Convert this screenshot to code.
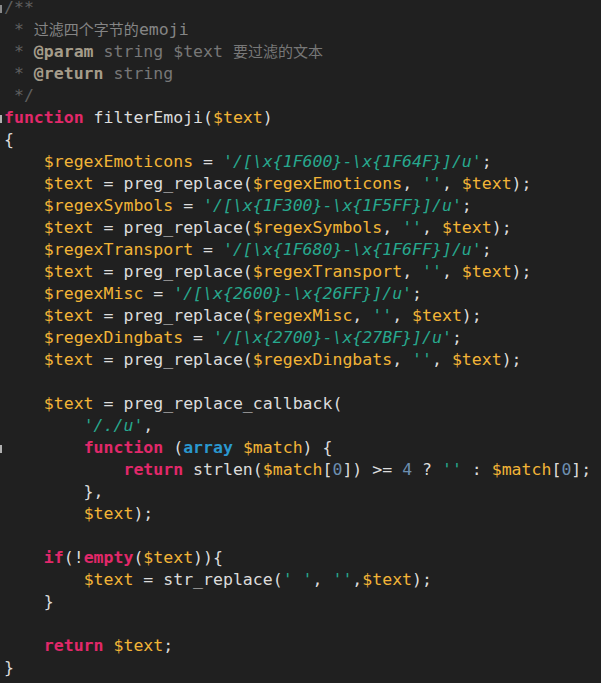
import React from "react";

type Tok = [string, string];

const C = {
  d: "text-[#dcdcdc]",
  v: "text-[#f2b437]",
  s: "text-[#27a88e] italic",
  k: "text-[#e2286a] font-bold",
  t: "text-[#2a97cf] font-bold",
  n: "text-[#6d8fb0]",
  c: "text-[#5f5f5f]",
  ct: "text-[#858585]",
  cj: "text-[#858585] text-[15px]",
  ca: "text-[#a59c8a] font-bold",
  cs: "text-[#777777]",
  csj: "text-[#777777] text-[15px]",
} as const;

const L = (...toks: [keyof typeof C, string][]): Tok[] => toks.map(([k, t]) => [C[k], t]);

const rep = (name: string): Tok[] =>
  L(["d", "    "], ["v", "$text"], ["d", " = preg_replace("], ["v", name], ["d", ", "], ["s", "''"], ["d", ", "], ["v", "$text"], ["d", ");"]);

const def = (name: string, a: string, b: string): Tok[] =>
  L(["d", "    "], ["v", name], ["d", " = "], ["s", `'/[\\x{${a}}-\\x{${b}}]/u'`], ["d", ";"]);

const lines: { toks: Tok[]; mark?: string }[] = [
  { toks: L(["c", "/**"]), mark: "bg-[#8a8a8a]" },
  { toks: L(["c", " * "], ["cj", "过滤四个字节的"], ["ct", "emoji"]) },
  { toks: L(["c", " * "], ["ca", "@param"], ["cs", " string $text "], ["csj", "要过滤的文本"]) },
  { toks: L(["c", " * "], ["ca", "@return"], ["cs", " string"]) },
  { toks: L(["c", " */"]) },
  { toks: L(["k", "function"], ["d", " filterEmoji("], ["v", "$text"], ["d", ")"]), mark: "bg-[#b0b0b0]" },
  { toks: L(["d", "{"]) },
  { toks: def("$regexEmoticons", "1F600", "1F64F") },
  { toks: rep("$regexEmoticons") },
  { toks: def("$regexSymbols", "1F300", "1F5FF") },
  { toks: rep("$regexSymbols") },
  { toks: def("$regexTransport", "1F680", "1F6FF") },
  { toks: rep("$regexTransport") },
  { toks: def("$regexMisc", "2600", "26FF") },
  { toks: rep("$regexMisc") },
  { toks: def("$regexDingbats", "2700", "27BF") },
  { toks: rep("$regexDingbats") },
  { toks: [] },
  { toks: L(["d", "    "], ["v", "$text"], ["d", " = preg_replace_callback("]) },
  { toks: L(["d", "        "], ["s", "'/./u'"], ["d", ","]) },
  {
    toks: L(["d", "        "], ["k", "function"], ["d", " ("], ["t", "array"], ["d", " "], ["v", "$match"], ["d", ") {"]),
    mark: "bg-[#b0b0b0]",
  },
  {
    toks: L(
      ["d", "            "],
      ["k", "return"],
      ["d", " strlen("],
      ["v", "$match"],
      ["d", "["],
      ["n", "0"],
      ["d", "]) >= "],
      ["n", "4"],
      ["d", " ? "],
      ["s", "''"],
      ["d", " : "],
      ["v", "$match"],
      ["d", "["],
      ["n", "0"],
      ["d", "];"]
    ),
  },
  { toks: L(["d", "        },"]) },
  { toks: L(["d", "        "], ["v", "$text"], ["d", ");"]) },
  { toks: [] },
  { toks: L(["d", "    "], ["k", "if"], ["d", "(!"], ["k", "empty"], ["d", "("], ["v", "$text"], ["d", ")){"]) },
  {
    toks: L(["d", "        "], ["v", "$text"], ["d", " = str_replace("], ["s", "' '"], ["d", ", "], ["s", "''"], ["d", ","], ["v", "$text"], ["d", ");"]),
  },
  { toks: L(["d", "    }"]) },
  { toks: [] },
  { toks: L(["d", "    "], ["k", "return"], ["d", " "], ["v", "$text"], ["d", ";"]) },
  { toks: L(["d", "}"]) },
];

export default function App() {
  return (
    <div className="w-[601px] h-[683px] overflow-hidden bg-[#202020]">
      <div
        className="-mt-[3px] pl-[4px] text-[16.55px] leading-[22px] whitespace-pre"
        style={{ fontFamily: '"DejaVu Sans Mono", "Noto Sans CJK SC", monospace' }}
      >
        {lines.map((ln, i) => (
          <div key={i} className="relative h-[22px]">
            {ln.mark && <div className={`absolute left-[-4px] top-[8px] w-[2px] h-[8px] ${ln.mark}`} />}
            {ln.toks.map(([cls, t], j) => (
              <span key={j} className={cls}>
                {t}
              </span>
            ))}
          </div>
        ))}
      </div>
    </div>
  );
}
